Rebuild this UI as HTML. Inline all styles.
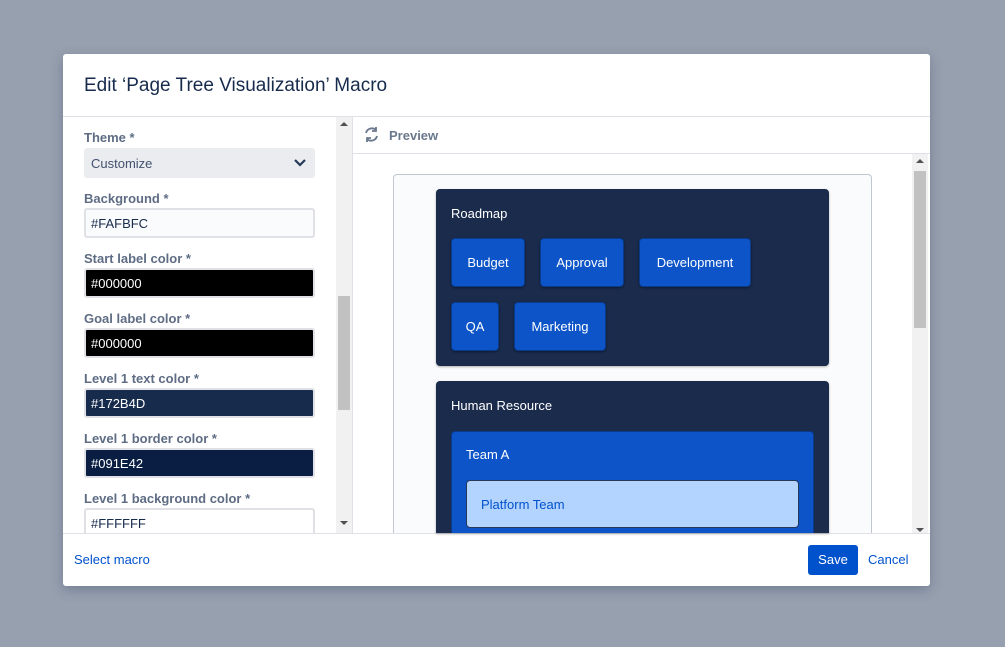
<!DOCTYPE html>
<html><head><meta charset="utf-8"><style>
*{box-sizing:border-box;margin:0;padding:0}
body{width:1005px;height:647px;background:#97A0AF;font-family:"Liberation Sans",sans-serif;position:relative;overflow:hidden}
.a{position:absolute}
.dlg{left:63px;top:54px;width:867px;height:532px;background:#fff;border-radius:3px;box-shadow:0 4px 12px rgba(9,30,66,.25)}
.lbl{position:absolute;left:84px;font-size:13px;font-weight:bold;color:#5E6C84}
.inp{position:absolute;left:84px;width:231px;height:30px;border:2px solid #DFE1E6;border-radius:3px;font-size:13px;padding:6px 5px;color:#172B4D;background:#FAFBFC}
.card{position:absolute;background:#1A2B4C;border-radius:4px;box-shadow:0 1px 2px rgba(0,0,0,.3)}
.btn{position:absolute;background:#0C54C7;border:1px solid #0a3a8a;border-radius:4px;color:#fff;font-size:13px;text-align:center;line-height:47px;height:49px;box-shadow:0 1px 2px rgba(0,0,0,.4)}
</style></head><body>
<div class="a dlg"></div>
<div class="a" style="left:84px;top:75px;font-size:19px;color:#172B4D">Edit ‘Page Tree Visualization’ Macro</div>
<div class="a" style="left:63px;top:116px;width:867px;height:1px;background:#DFE1E6"></div>
<div class="a" style="left:63px;top:533px;width:867px;height:1px;background:#DFE1E6"></div>
<div class="lbl" style="top:130px">Theme *</div>
<div class="inp" style="top:148px;background:#EBECF0;border-color:#EBECF0;color:#42526E">Customize
<svg class="a" style="right:6px;top:7px" width="14" height="12" viewBox="0 0 14 12"><path d="M2 3l5 5 5-5" stroke="#253858" stroke-width="2.2" fill="none"/></svg></div>
<div class="lbl" style="top:191px">Background *</div>
<div class="inp" style="top:208px">#FAFBFC</div>
<div class="lbl" style="top:251px">Start label color *</div>
<div class="inp" style="top:268px;background:#000;color:#fff">#000000</div>
<div class="lbl" style="top:311px">Goal label color *</div>
<div class="inp" style="top:328px;background:#000;color:#fff">#000000</div>
<div class="lbl" style="top:371px">Level 1 text color *</div>
<div class="inp" style="top:388px;background:#172B4D;color:#fff">#172B4D</div>
<div class="lbl" style="top:431px">Level 1 border color *</div>
<div class="inp" style="top:448px;background:#091E42;color:#fff">#091E42</div>
<div class="lbl" style="top:491px">Level 1 background color *</div>
<div class="inp" style="top:508px;height:25px;border-bottom:none;border-radius:3px 3px 0 0;background:#fff">#FFFFFF</div>
<div class="a" style="left:336px;top:117px;width:16px;height:416px;background:#F1F1F1"></div>
<div class="a" style="left:338px;top:296px;width:12px;height:114px;background:#C1C1C1"></div>
<div class="a" style="left:340px;top:122px;border:4px solid transparent;border-bottom:4px solid #505050;border-top:0"></div>
<div class="a" style="left:340px;top:521px;border:4px solid transparent;border-top:4px solid #505050;border-bottom:0"></div>
<div class="a" style="left:352px;top:117px;width:1px;height:416px;background:#DFE1E6"></div>
<svg class="a" style="left:363px;top:126px" width="17" height="17" viewBox="0 0 17 17"><path d="M3 7a6 6 0 0 1 10-3M14 10a6 6 0 0 1-10 3" stroke="#6B778C" stroke-width="1.8" fill="none"/><path d="M13 1v4h-4M4 16v-4h4" stroke="#6B778C" stroke-width="1.8" fill="none"/></svg>
<div class="a" style="left:389px;top:128px;font-size:13px;font-weight:bold;color:#6B778C">Preview</div>
<div class="a" style="left:353px;top:153px;width:577px;height:1px;background:#DFE1E6"></div>
<div class="a" style="left:912px;top:154px;width:16px;height:379px;background:#F1F1F1"></div>
<div class="a" style="left:914px;top:171px;width:12px;height:157px;background:#C1C1C1"></div>
<div class="a" style="left:916px;top:159px;border:4px solid transparent;border-bottom:4px solid #505050;border-top:0"></div>
<div class="a" style="left:916px;top:528px;border:4px solid transparent;border-top:4px solid #505050;border-bottom:0"></div>
<div class="a" style="left:393px;top:174px;width:479px;height:359px;background:#FAFBFC;border:1px solid #C1C7D0;border-bottom:none;border-radius:4px 4px 0 0"></div>
<div class="card" style="left:436px;top:189px;width:393px;height:177px"></div>
<div class="a" style="left:451px;top:206px;font-size:13px;color:#fff">Roadmap</div>
<div class="btn" style="left:451px;top:238px;width:74px">Budget</div>
<div class="btn" style="left:540px;top:238px;width:84px">Approval</div>
<div class="btn" style="left:639px;top:238px;width:112px">Development</div>
<div class="btn" style="left:451px;top:302px;width:48px">QA</div>
<div class="btn" style="left:514px;top:302px;width:92px">Marketing</div>
<div class="card" style="left:436px;top:381px;width:393px;height:152px;border-radius:4px 4px 0 0"></div>
<div class="a" style="left:451px;top:398px;font-size:13px;color:#fff">Human Resource</div>
<div class="a" style="left:451px;top:431px;width:363px;height:102px;background:#0C54C7;border:1px solid #0a3a8a;border-bottom:none;border-radius:4px 4px 0 0"></div>
<div class="a" style="left:466px;top:447px;font-size:13px;color:#fff">Team A</div>
<div class="a" style="left:466px;top:480px;width:333px;height:48px;background:#B3D4FF;border:1px solid #253858;border-radius:4px;font-size:13px;color:#0052CC;padding:16px 14px">Platform Team</div>
<div class="a" style="left:74px;top:552px;font-size:13px;color:#0052CC">Select macro</div>
<div class="a" style="left:808px;top:545px;width:50px;height:30px;background:#0052CC;border-radius:3px;color:#fff;font-size:13px;text-align:center;line-height:30px">Save</div>
<div class="a" style="left:868px;top:552px;font-size:13px;color:#0052CC">Cancel</div>
</body></html>
